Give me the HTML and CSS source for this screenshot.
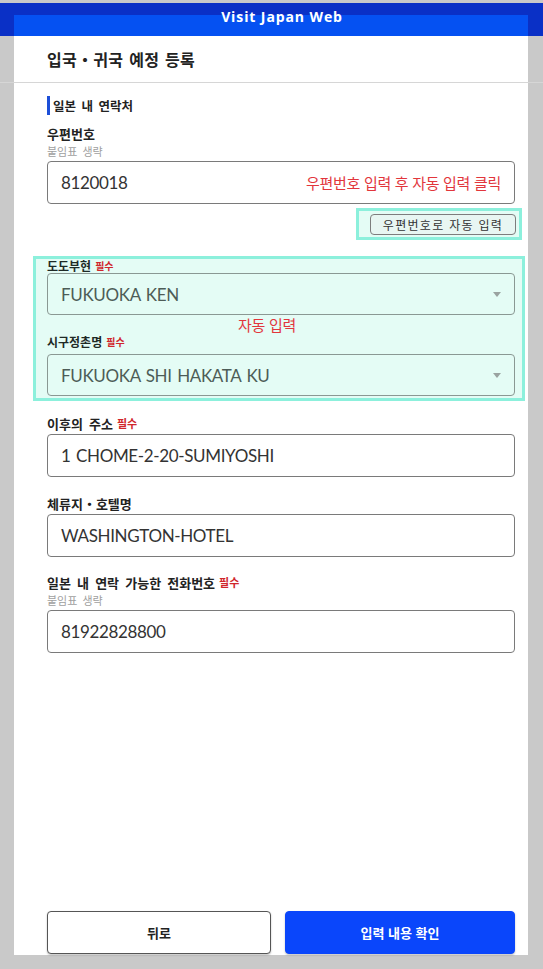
FILE: index.html
```html
<!DOCTYPE html>
<html lang="ko">
<head>
<meta charset="utf-8">
<title>Visit Japan Web</title>
<link rel="stylesheet" href="styles.css">
</head>
<body>
<header class="topbar"><span class="brand">Visit Japan Web</span></header>
<div class="titlebar"><h1 class="page-title">입국・귀국 예정 등록</h1></div>
<main class="card">
  <h2 class="section-title">일본 내 연락처</h2>

  <div class="label label-first">우편번호</div>
  <div class="hint">붙임표 생략</div>
  <div class="field">
    <span class="value">8120018</span>
    <span class="note note-inline">우편번호 입력 후 자동 입력 클릭</span>
  </div>

  <div class="btn-row">
    <div class="mark mark-btn"><button class="btn-auto" type="button">우편번호로 자동 입력</button></div>
  </div>

  <div class="mark mark-area">
    <div class="label label-sm"><span>도도부현</span><span class="req">필수</span></div>
    <div class="field select"><span class="value">FUKUOKA KEN</span><span class="caret"></span></div>
    <div class="note note-center">자동 입력</div>
    <div class="label label-sm"><span>시구정촌명</span><span class="req">필수</span></div>
    <div class="field select select2"><span class="value">FUKUOKA SHI HAKATA KU</span><span class="caret"></span></div>
  </div>

  <div class="label label-after"><span>이후의 주소</span><span class="req">필수</span></div>
  <div class="field field-gap"><span class="value">1 CHOME-2-20-SUMIYOSHI</span></div>

  <div class="label label-next"><span>체류지・호텔명</span></div>
  <div class="field field-gap"><span class="value">WASHINGTON-HOTEL</span></div>

  <div class="label label-phone"><span>일본 내 연락 가능한 전화번호</span><span class="req">필수</span></div>
  <div class="hint">붙임표 생략</div>
  <div class="field"><span class="value">81922828800</span></div>

  <div class="actions">
    <button class="btn btn-back" type="button">뒤로</button>
    <button class="btn btn-primary" type="button">입력 내용 확인</button>
  </div>
</main>
</body>
</html>
```
FILE: styles.css
```css
* { box-sizing: border-box; }
html, body { margin: 0; padding: 0; }
body {
  background: #c9c9c9;
  font-family: "Noto Sans CJK KR", "Noto Sans", sans-serif;
  color: #222;
  width: 543px;
  height: 969px;
  overflow: hidden;
}
.topbar {
  height: 33px;
  margin-top: 3px;
  background: linear-gradient(#0551f2, #0551f2) 14px 12px / 514px 21px no-repeat, #0a30c6;
  color: #fff;
  display: flex;
  justify-content: center;
  padding-left: 21px;
}
.brand {
  font-family: "Open Sans", "Noto Sans", sans-serif;
  font-weight: 700;
  font-size: 14px;
  line-height: 28px;
  letter-spacing: 0.9px;
}
.titlebar {
  height: 47px;
  background: linear-gradient(#fff, #fff) 14px 0 / 514px 100% no-repeat;
  border-bottom: 1px solid #d6d6d6;
  padding-left: 47px;
  display: flex;
  align-items: center;
}
.page-title {
  margin: 0;
  font-size: 16px;
  font-weight: 700;
  color: #222;
  letter-spacing: 0.3px;
  word-spacing: 1px;
}
.card {
  margin-left: 14px;
  width: 514px;
  height: 872px;
  background: #fff;
  padding: 0 13px 1px 33px;
  display: flex;
  flex-direction: column;
}
.section-title {
  margin: 13px 0 0;
  height: 19px;
  border-left: 3px solid #1d4fd8;
  padding-left: 3px;
  font-size: 12.5px;
  font-weight: 700;
  line-height: 19px;
  color: #222;
  word-spacing: 2px;
}
.label {
  display: flex;
  align-items: center;
  gap: 4px;
  height: 15px;
  font-size: 13px;
  font-weight: 700;
  line-height: 15px;
  color: #222;
  word-spacing: 2.5px;
  flex-shrink: 0;
}
.label-first { margin-top: 11px; }
.label-after { margin-top: 15px; }
.label-next { margin-top: 19px; }
.label-phone { margin-top: 18px; }
.hint {
  font-size: 11px;
  line-height: 13px;
  margin-top: 4px;
  color: #a0a0a0;
  margin-bottom: 3px;
  word-spacing: 2px;
  flex-shrink: 0;
}
.req {
  color: #d0262c;
  font-size: 11px;
  font-weight: 700;
  word-spacing: 0;
}
.field {
  height: 43px;
  border: 1px solid #7a7a7a;
  border-radius: 4px;
  background: #fff;
  display: flex;
  align-items: center;
  justify-content: space-between;
  padding: 0 13px 0 13px;
  flex-shrink: 0;
}
.field-gap { margin-top: 3px; }
.value {
  font-family: Lato, "Noto Sans", sans-serif;
  font-size: 17px;
  color: #333;
  letter-spacing: -0.35px;
  word-spacing: 1.5px;
}
.note {
  color: #e2363c;
  font-size: 15px;
  letter-spacing: -0.3px;
  font-family: "Noto Sans CJK KR", sans-serif;
}
.btn-row {
  display: flex;
  justify-content: flex-end;
  margin-top: 4px;
  margin-right: -7px;
  flex-shrink: 0;
}
.mark {
  border: 3px solid #8cf0dc;
  background: #e4fcf5;
}
.mark-btn {
  display: flex;
  padding: 3px 3px 2px 11px;
}
.btn-auto {
  display: block;
  width: 146px;
  height: 21px;
  margin: 0;
  padding: 0;
  border: 1px solid #7d7d7d;
  border-radius: 4px;
  background: #e8f6f2;
  font-family: "Noto Sans CJK KR", sans-serif;
  font-size: 12px;
  letter-spacing: 1.3px;
  color: #333;
  line-height: 19px;
}
.mark-area {
  display: flex;
  flex-direction: column;
  margin: 16px -10px 0 -14px;
  padding: 0 7px 2px 11px;
  flex-shrink: 0;
}
.label-sm {
  color: #1e2a26;
  font-size: 12px;
  height: 14px;
  line-height: 14px;
}
.label-sm .req { font-size: 10px; }
.select {
  height: 42px;
  background: transparent;
  border-color: #8a9893;
}
.select .value { color: #4d5c57; }
.select2 { margin-top: 5px; }
.caret {
  width: 0;
  height: 0;
  border-left: 4px solid transparent;
  border-right: 4px solid transparent;
  border-top: 5px solid #9aa3a0;
}
.note-center {
  height: 20px;
  line-height: 20px;
  padding-left: 191px;
}
.actions {
  margin-top: auto;
  display: grid;
  grid-template-columns: 224px 1fr;
  gap: 14px;
}
.btn {
  height: 43px;
  border-radius: 4px;
  font-family: "Noto Sans CJK KR", sans-serif;
  font-size: 13px;
  font-weight: 700;
  margin: 0;
  box-shadow: 0 1px 2px rgba(0,0,0,0.25);
}
.btn-back {
  background: #fff;
  border: 1px solid #555;
  color: #222;
}
.btn-primary {
  background: #0a46fb;
  border: 1px solid #0a46fb;
  color: #fff;
}
```
